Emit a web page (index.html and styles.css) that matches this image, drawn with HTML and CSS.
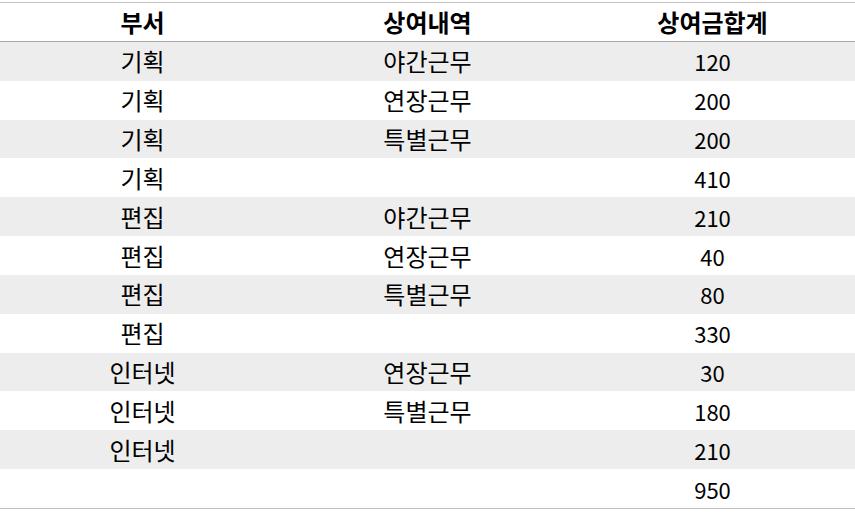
FILE: index.html
```html
<!DOCTYPE html>
<html lang="ko">
<head>
<meta charset="utf-8">
<link rel="stylesheet" href="styles.css">
</head>
<body>
<div class="wrap">
<table class="grid">
  <thead>
    <tr><th>부서</th><th>상여내역</th><th>상여금합계</th></tr>
  </thead>
  <tbody>
    <tr><td>기획</td><td>야간근무</td><td class="num">120</td></tr>
    <tr><td>기획</td><td>연장근무</td><td class="num">200</td></tr>
    <tr><td>기획</td><td>특별근무</td><td class="num">200</td></tr>
    <tr><td>기획</td><td></td><td class="num">410</td></tr>
    <tr><td>편집</td><td>야간근무</td><td class="num">210</td></tr>
    <tr><td>편집</td><td>연장근무</td><td class="num">40</td></tr>
    <tr><td>편집</td><td>특별근무</td><td class="num">80</td></tr>
    <tr><td>편집</td><td></td><td class="num">330</td></tr>
    <tr><td>인터넷</td><td>연장근무</td><td class="num">30</td></tr>
    <tr><td>인터넷</td><td>특별근무</td><td class="num">180</td></tr>
    <tr><td>인터넷</td><td></td><td class="num">210</td></tr>
    <tr><td></td><td></td><td class="num">950</td></tr>
  </tbody>
</table>
</div>
</body>
</html>
```
FILE: styles.css
```css
html, body {
  margin: 0;
  padding: 0;
  background: #fff;
}
.wrap {
  padding-top: 2px;
}
.grid {
  width: 100%;
  border-collapse: collapse;
  table-layout: fixed;
  font-family: "Noto Sans CJK KR", "Noto Sans", sans-serif;
  font-size: 24px;
  color: #000;
  border-top: 1px solid #c4c4c4;
  border-bottom: 1px solid #bdbdbd;
}
.grid th {
  font-weight: bold;
  height: 38px;
  padding: 0;
  text-align: center;
  border-bottom: 1px solid #a8a8a8;
  line-height: 38px;
}
.grid td {
  height: 38.83px;
  padding: 0;
  text-align: center;
  line-height: 38px;
}
.grid td.num {
  font-size: 22px;
}
.grid tbody tr:nth-child(odd) td {
  background: #ededed;
}
```
